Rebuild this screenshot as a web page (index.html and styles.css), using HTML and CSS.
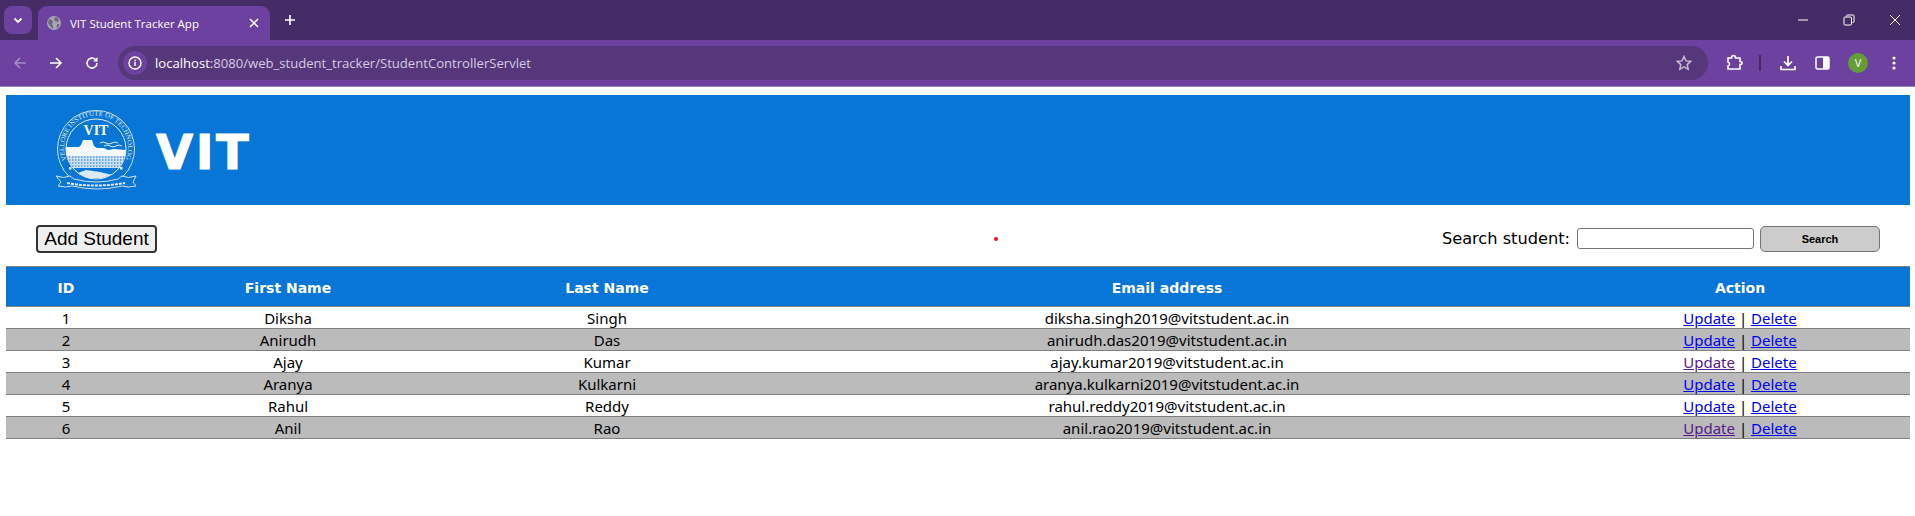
FILE: index.html
```html
<!DOCTYPE html>
<html lang="en">
<head>
    <meta charset="UTF-8">
    <meta name="viewport" content="width=device-width, initial-scale=1.0">
    <title>VIT Student Tracker App</title>
    <link rel="stylesheet" href="styles.css">
</head>
<body>
    <!-- browser frame -->
    <div class="tabstrip">
        <div class="tab-search">
            <svg width="12" height="12" viewBox="0 0 12 12"><path d="M2.500 4.500 6 8l3.500-3.500" fill="none" stroke="#fff" stroke-width="1.800"/></svg>
        </div>
        <div class="tab">
            <svg class="favicon" width="14" height="14" viewBox="0 0 14 14"><circle cx="7" cy="7" r="7" fill="#a9a4b4"/><path d="M2 3l3 1 1 2-1 2 1 2v3L3 10 1 7zM8 1l3 1 1 3-2 1-2-1-1-2zM10 8h2.500l-1 3-2 1z" fill="#6d6780"/></svg>
            <span class="tab-title">VIT Student Tracker App</span>
            <svg class="tab-close" width="10" height="10" viewBox="0 0 10 10"><path d="M1 1l8 8M9 1L1 9" stroke="#fff" stroke-width="1.500"/></svg>
        </div>
        <svg class="new-tab" width="12" height="12" viewBox="0 0 12 12"><path d="M6 1v10M1 6h10" stroke="#fff" stroke-width="1.600"/></svg>
        <div class="window-btns">
            <svg width="12" height="12" viewBox="0 0 12 12"><path d="M1 6h10" stroke="#fff"/></svg>
            <svg width="12" height="12" viewBox="0 0 12 12"><path d="M3.500 2.500V2q0-1 1-1h5.500q1 0 1 1v5.500q0 1-1 1h-.5" fill="none" stroke="#fff"/><rect x="1" y="3" width="7.500" height="8" rx="1" fill="none" stroke="#fff"/></svg>
            <svg width="12" height="12" viewBox="0 0 12 12"><path d="M1 1l10 10M11 1L1 11" stroke="#fff"/></svg>
        </div>
    </div>
    <div class="toolbar">
        <svg class="nav-btn" width="14" height="14" viewBox="0 0 14 14"><path d="M13 7H2M7 2 2 7l5 5" fill="none" stroke="#a58cc4" stroke-width="1.600"/></svg>
        <svg class="nav-btn" width="14" height="14" viewBox="0 0 14 14"><path d="M1 7h11M7 2l5 5-5 5" fill="none" stroke="#fff" stroke-width="1.600"/></svg>
        <svg class="nav-btn" width="14" height="14" viewBox="0 0 14 14"><path d="M12 7a5 5 0 1 1-1.500-3.500L12 5" fill="none" stroke="#fff" stroke-width="1.600"/><path d="M12.500 1v4.500H8z" fill="#fff"/></svg>
        <div class="omnibox">
            <span class="site-info">
                <svg width="14" height="14" viewBox="0 0 14 14"><circle cx="7" cy="7" r="6" fill="none" stroke="#fff" stroke-width="1.400"/><path d="M7 6v4M7 3.800v1.400" stroke="#fff" stroke-width="1.500"/></svg>
            </span>
            <span class="url"><b>localhost</b>:8080/web_student_tracker/StudentControllerServlet</span>
            <svg class="star" width="16" height="16" viewBox="0 0 16 16"><path d="M8 1.500l2 4.400 4.700.5-3.500 3.200 1 4.700L8 11.900l-4.200 2.400 1-4.700L1.300 6.400 6 5.900z" fill="none" stroke="#c4b8d2" stroke-width="1.500"/></svg>
        </div>
        <svg class="tool-btn ext" width="17" height="17" viewBox="0 0 17 17"><path d="M2 4h3.500q0-2.500 2-2.500T9.500 4H14v3.500q2 0 2 1.500t-2 1.500V15H2v-3q1.500-.5 1.500-2T2 8z" fill="none" stroke="#fff" stroke-width="1.600"/></svg>
        <span class="divider"></span>
        <svg class="tool-btn" width="16" height="16" viewBox="0 0 16 16"><path d="M8 1v9M4 6.500 8 10.500l4-4M1 11v3.500h14V11" fill="none" stroke="#fff" stroke-width="1.700"/></svg>
        <svg class="tool-btn" width="15" height="14" viewBox="0 0 15 14"><rect x="1" y="1" width="13" height="12" rx="1.500" fill="none" stroke="#fff" stroke-width="1.500"/><rect x="8" y="1" width="6" height="12" fill="#fff"/></svg>
        <span class="avatar">V</span>
        <svg class="menu" width="4" height="14" viewBox="0 0 4 14"><circle cx="2" cy="2" r="1.600" fill="#fff"/><circle cx="2" cy="7" r="1.600" fill="#fff"/><circle cx="2" cy="12" r="1.600" fill="#fff"/></svg>
    </div>

    <!-- page -->
    <div class="page">
        <div class="header">
            <svg class="logo" width="80" height="80" viewBox="0 0 80 80">
                <defs>
                    <path id="ringText" d="M10.500 50A32 32 0 1 1 69.500 50"/>
                    <clipPath id="inner"><circle cx="40" cy="39" r="30"/></clipPath>
                </defs>
                <circle cx="40" cy="39" r="38.500" fill="none" stroke="#cfe2f6" stroke-width="1"/>
                <circle cx="40" cy="39" r="30" fill="none" stroke="#e6f0fa" stroke-width="1"/>
                <text class="logo-ring"><textPath href="#ringText" textLength="130" lengthAdjust="spacingAndGlyphs">VELLORE INSTITUTE OF TECHNOLOGY</textPath></text>
                <text class="logo-vit" x="40" y="25" text-anchor="middle">VIT</text>
                <g clip-path="url(#inner)">
                    <path d="M9 37h14l2-2 2-5h9l2 6 3 2h7l4 2 6-1 12 1v7H9z" fill="#f4f9fe"/>
                    <path d="M44 33q3-2 6 0t6 0 6 0M48 36q3-2 6 0t6 0 6 0" fill="none" stroke="#dbe9f8" stroke-width="1"/>
                    <path d="M10 46h60v12H10z" fill="#cfe1f5"/>
                    <path d="M10 47h60M10 50h60M10 53h60M10 56h60" stroke="#0876d6" stroke-width="1" stroke-dasharray="1.500 1.500"/>
                    <path d="M22 63l8-3 14 2 12 3-10 3H30z" fill="#dbe9f8"/>
                </g>
                <rect x="13" y="57" width="2.500" height="2.500" fill="#e6f0fa"/>
                <rect x="64" y="57" width="2.500" height="2.500" fill="#e6f0fa"/>
                <path d="M0 66q8 3 14 0l4 3q22 6 44 0l4-3q6 3 14 0l-3 6 3 4q-8 2-14 0-24 6-50 0-6 2-14 0l3-4z" fill="#0876d6" stroke="#cfe2f5" stroke-width="1"/>
                <path d="M11 73q29 5 58 0" fill="none" stroke="#dce9f7" stroke-width="2" stroke-dasharray="3 1"/>
            </svg>
            <h1>VIT</h1>
        </div>

        <div class="actions">
            <button class="add-btn">Add Student</button>
            <span class="dot"></span>
            <form class="search-form">
                <label for="search">Search student:</label>
                <input id="search" class="search-input" type="text">
                <button class="search-btn" type="button">Search</button>
            </form>
        </div>

        <table class="students">
            <thead>
                <tr>
                    <th class="col-id">ID</th>
                    <th class="col-first">First Name</th>
                    <th class="col-last">Last Name</th>
                    <th class="col-email">Email address</th>
                    <th class="col-action">Action</th>
                </tr>
            </thead>
            <tbody>
                <tr><td>1</td><td>Diksha</td><td>Singh</td><td>diksha.singh2019@vitstudent.ac.in</td><td><a href="#u1">Update</a> | <a href="#d1">Delete</a></td></tr>
                <tr><td>2</td><td>Anirudh</td><td>Das</td><td>anirudh.das2019@vitstudent.ac.in</td><td><a href="#u2">Update</a> | <a href="#d2">Delete</a></td></tr>
                <tr><td>3</td><td>Ajay</td><td>Kumar</td><td>ajay.kumar2019@vitstudent.ac.in</td><td><a class="seen" href="#u3">Update</a> | <a href="#d3">Delete</a></td></tr>
                <tr><td>4</td><td>Aranya</td><td>Kulkarni</td><td>aranya.kulkarni2019@vitstudent.ac.in</td><td><a href="#u4">Update</a> | <a href="#d4">Delete</a></td></tr>
                <tr><td>5</td><td>Rahul</td><td>Reddy</td><td>rahul.reddy2019@vitstudent.ac.in</td><td><a href="#u5">Update</a> | <a href="#d5">Delete</a></td></tr>
                <tr><td>6</td><td>Anil</td><td>Rao</td><td>anil.rao2019@vitstudent.ac.in</td><td><a class="seen" href="#u6">Update</a> | <a href="#d6">Delete</a></td></tr>
            </tbody>
        </table>
    </div>
</body>
</html>
```

FILE: styles.css
```css
* {
    margin: 0;
    padding: 0;
    box-sizing: border-box;
}

html, body {
    height: 100%;
    overflow: hidden;
}

body {
    background-color: #fff;
    font-family: "DejaVu Sans", sans-serif;
}

/* browser frame */
.tabstrip {
    display: flex;
    align-items: flex-start;
    height: 40px;
    padding: 6px 0 0 4px;
    background-color: #452c66;
    color: #fff;
}

.tab-search {
    display: flex;
    align-items: center;
    justify-content: center;
    width: 28px;
    height: 28px;
    border-radius: 8px;
    background-color: #6d41a0;
}

.tab {
    display: flex;
    align-items: center;
    width: 232px;
    height: 34px;
    margin-left: 6px;
    padding: 0 11px 0 9px;
    border-radius: 9px 9px 0 0;
    background-color: #6d41a0;
}

.tab-title {
    flex: 1;
    margin-left: 9px;
    font-family: "Open Sans", sans-serif;
    font-size: 11.500px;
}

.new-tab {
    margin: 8px 0 0 14px;
}

.window-btns {
    display: flex;
    gap: 34px;
    margin: 8px 14px 0 auto;
}

.toolbar {
    display: flex;
    align-items: center;
    height: 47px;
    padding: 0 0 1px 13px;
    background-color: #6d41a0;
    border-bottom: 1px solid #9a7fba;
}

.nav-btn {
    margin-right: 22px;
}

.omnibox {
    display: flex;
    align-items: center;
    width: 1590px;
    height: 34px;
    margin-left: -3px;
    padding: 0 16px 0 5px;
    border-radius: 17px;
    background-color: #57377c;
}

.site-info {
    display: flex;
    align-items: center;
    justify-content: center;
    width: 24px;
    height: 24px;
    border-radius: 50%;
    background-color: #6d41a0;
}

.url {
    flex: 1;
    margin-left: 8px;
    font-family: "Open Sans", sans-serif;
    font-size: 13.100px;
    color: #d6cbe3;
}

.url b {
    font-weight: 400;
    color: #fff;
}

.tool-btn {
    margin-left: 19px;
}

.ext {
    margin-left: 18px;
}

.divider {
    width: 2px;
    height: 16px;
    margin-left: 16px;
    background-color: #452c66;
}

.avatar {
    display: flex;
    align-items: center;
    justify-content: center;
    width: 20px;
    height: 20px;
    margin-left: 18px;
    border-radius: 50%;
    background-color: #669c35;
    color: #fff;
    font-family: "Open Sans", sans-serif;
    font-size: 11px;
}

.menu {
    margin-left: 24px;
}

/* page */
.page {
    padding: 8px 5px 0 6px;
}

.header {
    display: flex;
    align-items: center;
    height: 110px;
    padding-left: 50px;
    background-color: #0876d6;
}

.logo {
    overflow: visible;
}

.logo-ring {
    font-family: "Liberation Serif", serif;
    font-size: 6.500px;
    fill: #e3eefa;
}

.logo-vit {
    font-family: "Liberation Serif", serif;
    font-weight: 700;
    font-size: 14px;
    fill: #fff;
}

h1 {
    margin: 3px 0 0 20px;
    font-size: 48px;
    font-weight: 700;
    letter-spacing: 2.500px;
    -webkit-text-stroke: 1px #fff;
    color: #fff;
}

.actions {
    display: flex;
    align-items: center;
    justify-content: space-between;
    height: 61px;
    padding: 6px 30px 0;
}

.add-btn {
    width: 121px;
    height: 28px;
    border: 2px solid #333;
    border-radius: 4px;
    background-color: #efefef;
    color: #000;
    font-family: "Liberation Sans", sans-serif;
    font-size: 19px;
}

.dot {
    width: 4px;
    height: 4px;
    margin-left: 394px;
    border-radius: 50%;
    background-color: #e8141c;
}

.search-form {
    display: flex;
    align-items: center;
}

.search-form label {
    font-size: 16.200px;
}

.search-input {
    width: 177px;
    height: 21px;
    margin-left: 7px;
    border: 1px solid #767676;
    border-radius: 3px;
    background-color: #fff;
}

.search-btn {
    width: 120px;
    height: 26px;
    margin-left: 6px;
    border: 1px solid #767676;
    border-radius: 5px;
    background-color: #ccc;
    color: #000;
    font-family: "Liberation Sans", sans-serif;
    font-size: 11px;
    font-weight: 700;
}

.students {
    width: 100%;
    border-collapse: collapse;
    table-layout: fixed;
    border-top: 1px solid #808080;
}

.students th {
    height: 40px;
    padding-top: 2px;
    background-color: #0876d6;
    border-bottom: 1px solid #808080;
    color: #fff;
    font-family: "DejaVu Sans", sans-serif;
    font-size: 14px;
    font-weight: 700;
}

.col-id { width: 120px; }
.col-first { width: 324px; }
.col-last { width: 314px; }
.col-email { width: 806px; }
.col-action { width: 340px; }

.students td {
    height: 22px;
    border-bottom: 1px solid #808080;
    text-align: center;
    font-family: "Noto Sans", sans-serif;
    font-size: 15px;
    line-height: 20px;
    color: #000;
}

.students tbody tr:nth-child(even) {
    background-color: #bbb;
}

.students a {
    color: #00e;
}

.students a.seen {
    color: #551a8b;
}
```
